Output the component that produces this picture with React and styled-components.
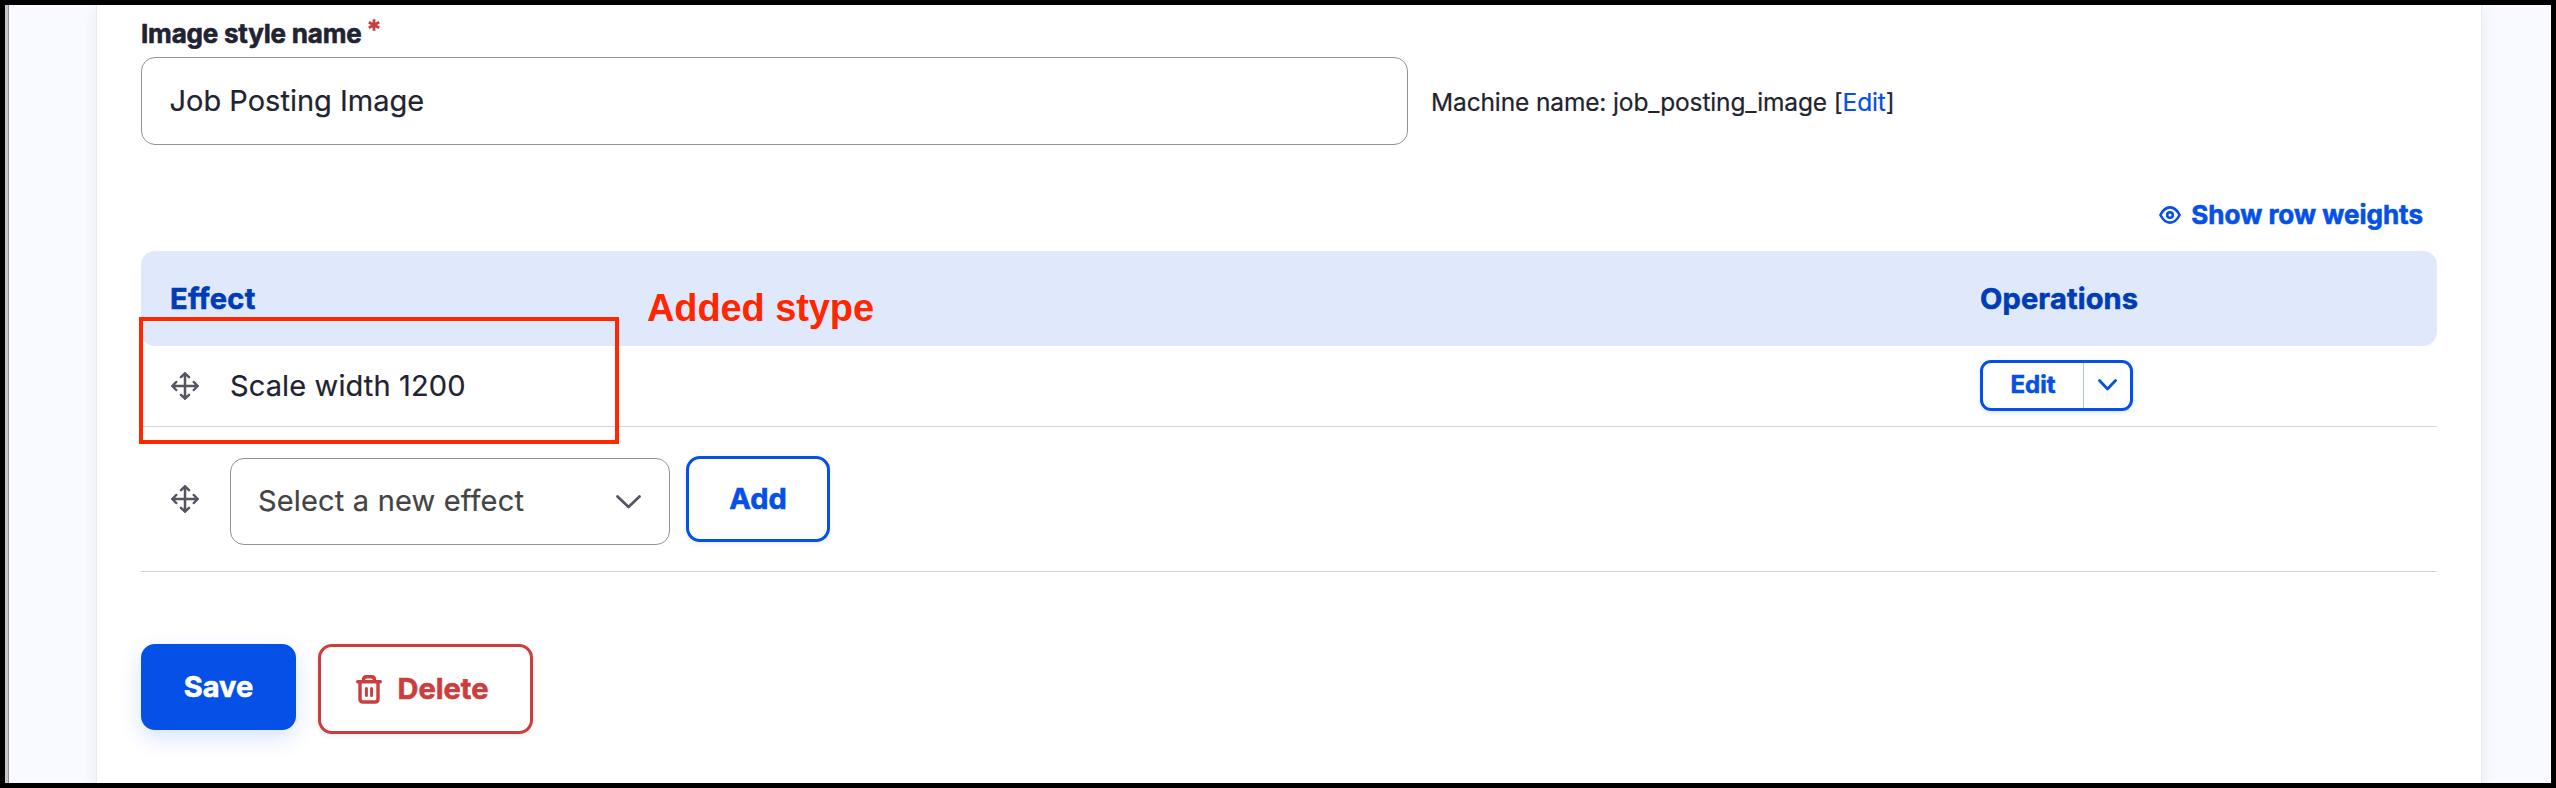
import React from "react";
import styled, { createGlobalStyle } from "styled-components";

const Global = createGlobalStyle`
  *, *::before, *::after { box-sizing: border-box; }
  body { margin: 0; background: #000; }
`;

const Frame = styled.div`
  height: 788px;
  border: 5px solid #000;
  background: #f9faff;
  display: flex;
  overflow: hidden;
  font-family: Inter, "Liberation Sans", sans-serif;
  color: #222330;
`;

const Edge = styled.div`
  width: 4px;
  flex: none;
  background: #c8c6c3;
  border-right: 1px solid #8f8f8f;
`;

const Card = styled.main`
  position: relative;
  margin-left: 88px;
  width: 2384px;
  flex: none;
  padding: 10px 44px 0;
  background: #fff;
  box-shadow: 0 0 0 1px #e9ebf0, 0 4px 14px rgba(0, 40, 110, 0.09);
`;

const Text = styled.span`
  font-size: ${(p) => p.$size}px;
  font-weight: ${(p) => p.$weight || 400};
  letter-spacing: ${(p) => p.$track || 0}px;
  color: ${(p) => p.$color || "inherit"};
  -webkit-text-stroke: ${(p) => (p.$weight ? 0.6 : 0.2)}px currentColor;
  line-height: 1.2;
  white-space: nowrap;
`;

const Label = styled.label`
  display: flex;
  height: 37px;
  margin-bottom: 5px;
  align-items: center;
`;

const Required = styled.svg`
  width: 12px;
  height: 12px;
  margin: -17px 0 0 6px;
`;

const Field = styled.div`
  display: flex;
  align-items: center;
  gap: 23px;
`;

const Input = styled.div`
  width: 1267px;
  height: 88px;
  border: 1px solid #8e929c;
  border-radius: 14px;
  padding-left: 27.5px;
  display: flex;
  align-items: center;
`;

const MachineName = styled.div`
  padding-top: 4px;
`;

const Weights = styled.div`
  height: 51px;
  margin: 44px 14px 11px 0;
  display: flex;
  justify-content: flex-end;
  align-items: center;
  gap: 9px;
`;

const HeaderRow = styled.div`
  height: 95px;
  border-radius: 14px;
  background: #e0e9fc;
  display: grid;
  grid-template-columns: 1839px 1fr;
  align-items: center;
`;

const Heading = styled.div`
  padding: 2px 0 0 ${(p) => p.$inset || 0}px;
`;

const Row = styled.div`
  height: ${(p) => p.$height}px;
  border-bottom: 1px solid #d4d4d8;
  display: grid;
  grid-template-columns: 30px 59px 1750px 1fr;
  align-items: center;
`;

const Handle = styled.svg`
  width: 28px;
  height: 28px;
  grid-column: 2;
`;

const Cell = styled.div`
  display: flex;
  align-items: flex-start;
  gap: 16px;
  margin-top: ${(p) => p.$drop || 0}px;
`;

const Split = styled.div`
  width: 153px;
  height: 51px;
  margin-bottom: 2px;
  border: 3px solid #0550e6;
  border-radius: 11px;
  display: flex;
  box-shadow: 0 2px 5px rgba(5, 80, 230, 0.14);
`;

const SplitMain = styled.div`
  width: 101px;
  border-right: 1px solid #afc7f6;
  display: flex;
  align-items: center;
  justify-content: center;
`;

const SplitToggle = styled.div`
  flex: 1;
  display: flex;
  align-items: center;
  justify-content: center;
`;

const Select = styled.div`
  width: 440px;
  height: 87px;
  margin-top: 2px;
  border: 1px solid #8e929c;
  border-radius: 14px;
  padding: 0 28px 0 27px;
  display: flex;
  align-items: center;
  justify-content: space-between;
`;

const tones = {
  primary: "background:#0550e6;border-color:#0550e6;color:#fff;box-shadow:0 8px 22px rgba(5,80,230,.16);",
  outline: "background:#fff;border-color:#0550e6;color:#0550e6;box-shadow:0 2px 5px rgba(5,80,230,.1);",
  danger: "background:#fff;border-color:#cc3d3d;color:#cc3d3d;box-shadow:0 2px 5px rgba(204,61,61,.1);",
};

const Button = styled.div`
  width: ${(p) => p.$width}px;
  height: ${(p) => p.$height}px;
  padding: 1px ${(p) => p.$trim || 0}px 0 0;
  border: 3px solid;
  border-radius: 14px;
  display: flex;
  align-items: center;
  justify-content: center;
  gap: 16px;
  ${(p) => tones[p.$tone]}
`;

const Actions = styled.div`
  margin-top: 72px;
  display: flex;
  align-items: flex-start;
  gap: 22px;
`;

const Highlight = styled.div`
  position: absolute;
  left: 42px;
  top: 312px;
  width: 480px;
  height: 127px;
  border: 4px solid #ff2600;
`;

const Note = styled.div`
  position: absolute;
  left: 550px;
  top: 281px;
  font: bold 38px/44px "Liberation Sans", Arial, sans-serif;
  letter-spacing: -0.1px;
  color: #ff2600;
  white-space: nowrap;
`;

const Move = () => (
  <Handle viewBox="0 0 28 28" fill="none" stroke="#545560" strokeWidth="2.5" strokeLinecap="round" strokeLinejoin="round">
    <path d="M14 1.3v25.4M1.3 14h25.4M10 5.2l4-3.9 4 3.9M10 22.8l4 3.9 4-3.9M5.2 10l-3.9 4 3.9 4M22.8 10l3.9 4-3.9 4" />
  </Handle>
);

const Chevron = ({ w, h, color, stroke }) => (
  <svg width={w} height={h} viewBox={`0 0 ${w} ${h}`} fill="none" stroke={color} strokeWidth={stroke} strokeLinecap="round" strokeLinejoin="round">
    <path d={`M1.5 1.5L${w / 2} ${h - 2}L${w - 1.5} 1.5`} />
  </svg>
);

export default function App() {
  return (
    <>
      <Global />
      <Frame>
        <Edge />
        <Card>
          <Label>
            <Text $size={26} $weight={700} $track={-0.2}>Image style name</Text>
            <Required viewBox="0 0 12 12" stroke="#cc3d3d" strokeWidth="2.8">
              <path d="M6 .3v11.4M.8 3.2l10.4 5.6M.8 8.8l10.4-5.6" />
            </Required>
          </Label>
          <Field>
            <Input><Text $size={29}>Job Posting Image</Text></Input>
            <MachineName>
              <Text $size={24.5} $track={-0.13}>Machine name: job_posting_image [<Text $size={24.5} $track={-0.13} $color="#0550e6">Edit</Text>]</Text>
            </MachineName>
          </Field>
          <Weights>
            <svg width="24" height="20" viewBox="0 0 24 20" fill="none" stroke="#0550e6" strokeWidth="2.6">
              <path d="M2.4 10C5.2 4.6 8.2 2.4 12 2.4S18.800 4.600 21.600 10C18.800 15.400 15.800 17.600 12 17.600S5.200 15.400 2.400 10Z" strokeLinejoin="round" />
              <circle cx="12" cy="10" r="2.8" />
            </svg>
            <Text $size={26} $weight={700} $color="#0550e6">Show row weights</Text>
          </Weights>
          <HeaderRow>
            <Heading $inset={29}><Text $size={29} $weight={700} $track={0.3} $color="#003cb5">Effect</Text></Heading>
            <Heading><Text $size={29} $weight={700} $track={0.15} $color="#003cb5">Operations</Text></Heading>
          </HeaderRow>
          <Row $height={81}>
            <Move />
            <Cell><Text $size={29} $track={0.12}>Scale width 1200</Text></Cell>
            <Split>
              <SplitMain><Text $size={24} $weight={700} $color="#0550e6">Edit</Text></SplitMain>
              <SplitToggle><Chevron w={19} h={12} color="#0550e6" stroke={2.8} /></SplitToggle>
            </Split>
          </Row>
          <Row $height={145}>
            <Move />
            <Cell $drop={3}>
              <Select>
                <Text $size={29} $track={0.17} $color="#444">Select a new effect</Text>
                <Chevron w={25} h={14} color="#545560" stroke={2.7} />
              </Select>
              <Button $tone="outline" $width={144} $height={86}><Text $size={29} $weight={700}>Add</Text></Button>
            </Cell>
          </Row>
          <Actions>
            <Button $tone="primary" $width={155} $height={86}><Text $size={29} $weight={700}>Save</Text></Button>
            <Button $tone="danger" $width={215} $height={90} $trim={7}>
              <svg width="26" height="29" viewBox="0 0 26 29" fill="none" stroke="currentColor" strokeWidth="3.4">
                <path d="M1.700 6.800H24.300" strokeLinecap="round" />
                <path d="M7.500 6V5Q7.500 1.800 10.500 1.800H15.500Q18.500 1.800 18.500 5V6M4 7V24Q4 27 7 27H19Q22 27 22 24V7" />
                <path d="M10.400 13.500V20.500M15.600 13.500V20.500" strokeLinecap="round" strokeWidth="3" />
              </svg>
              <Text $size={29} $weight={700}>Delete</Text>
            </Button>
          </Actions>
          <Highlight />
          <Note>Added stype</Note>
        </Card>
      </Frame>
    </>
  );
}
